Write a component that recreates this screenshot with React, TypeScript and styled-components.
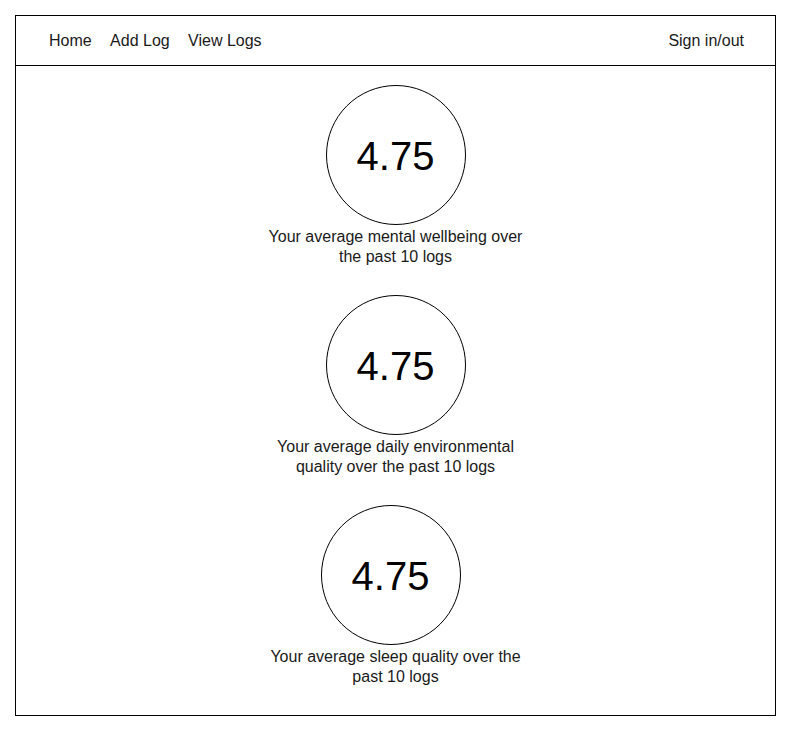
import React from 'react';
import styled, { createGlobalStyle } from 'styled-components';

const GlobalStyle = createGlobalStyle`
  * {
    box-sizing: border-box;
  }
  body {
    margin: 0;
    padding: 15px;
    background: #ffffff;
    font-family: 'Liberation Sans', Arial, sans-serif;
  }
`;

interface Stat {
  value: string;
  label: string;
  shift?: number;
}

const stats: Stat[] = [
  { value: '4.75', label: 'Your average mental wellbeing over the past 10 logs' },
  { value: '4.75', label: 'Your average daily environmental quality over the past 10 logs' },
  { value: '4.75', label: 'Your average sleep quality over the past 10 logs', shift: 10 },
];

const App: React.FC = () => {
  return (
    <>
      <GlobalStyle />
      <Frame>
        <NavBar>
          <NavLinks>
            <NavLink>Home</NavLink>
            <NavLink>Add Log</NavLink>
            <NavLink>View Logs</NavLink>
          </NavLinks>
          <NavLink>Sign in/out</NavLink>
        </NavBar>
        <Main>
          {stats.map((stat, index) => (
            <StatBlock key={index}>
              <Circle $shift={stat.shift || 0}>{stat.value}</Circle>
              <Caption>{stat.label}</Caption>
            </StatBlock>
          ))}
        </Main>
      </Frame>
    </>
  );
};

const Frame = styled.div`
  width: 761px;
  height: 701px;
  border: 1px solid #000000;
  display: flex;
  flex-direction: column;
`;
const NavBar = styled.nav`
  height: 50px;
  flex-shrink: 0;
  display: flex;
  align-items: center;
  justify-content: space-between;
  padding-left: 33px;
  padding-right: 31px;
  border-bottom: 1px solid #000000;
`;
const NavLinks = styled.div`
  display: flex;
  gap: 18.4px;
`;
const NavLink = styled.span`
  font-size: 16px;
  line-height: 18px;
  color: #1a1a1a;
  cursor: pointer;
`;
const Main = styled.main`
  display: flex;
  flex-direction: column;
  align-items: center;
  padding-top: 19px;
  gap: 28px;
`;
const StatBlock = styled.div`
  display: flex;
  flex-direction: column;
  align-items: center;
`;
const Circle = styled.div<{ $shift: number }>`
  width: 140px;
  height: 140px;
  border: 1px solid #000000;
  border-radius: 50%;
  display: flex;
  align-items: center;
  justify-content: center;
  margin-right: ${(props) => props.$shift}px;
  font-size: 40px;
  padding-top: 2px;
  color: #000000;
`;
const Caption = styled.p`
  margin: 2px 0 0;
  width: 270px;
  font-size: 16px;
  line-height: 20px;
  text-align: center;
  color: #1a1a1a;
`;

export default App;
